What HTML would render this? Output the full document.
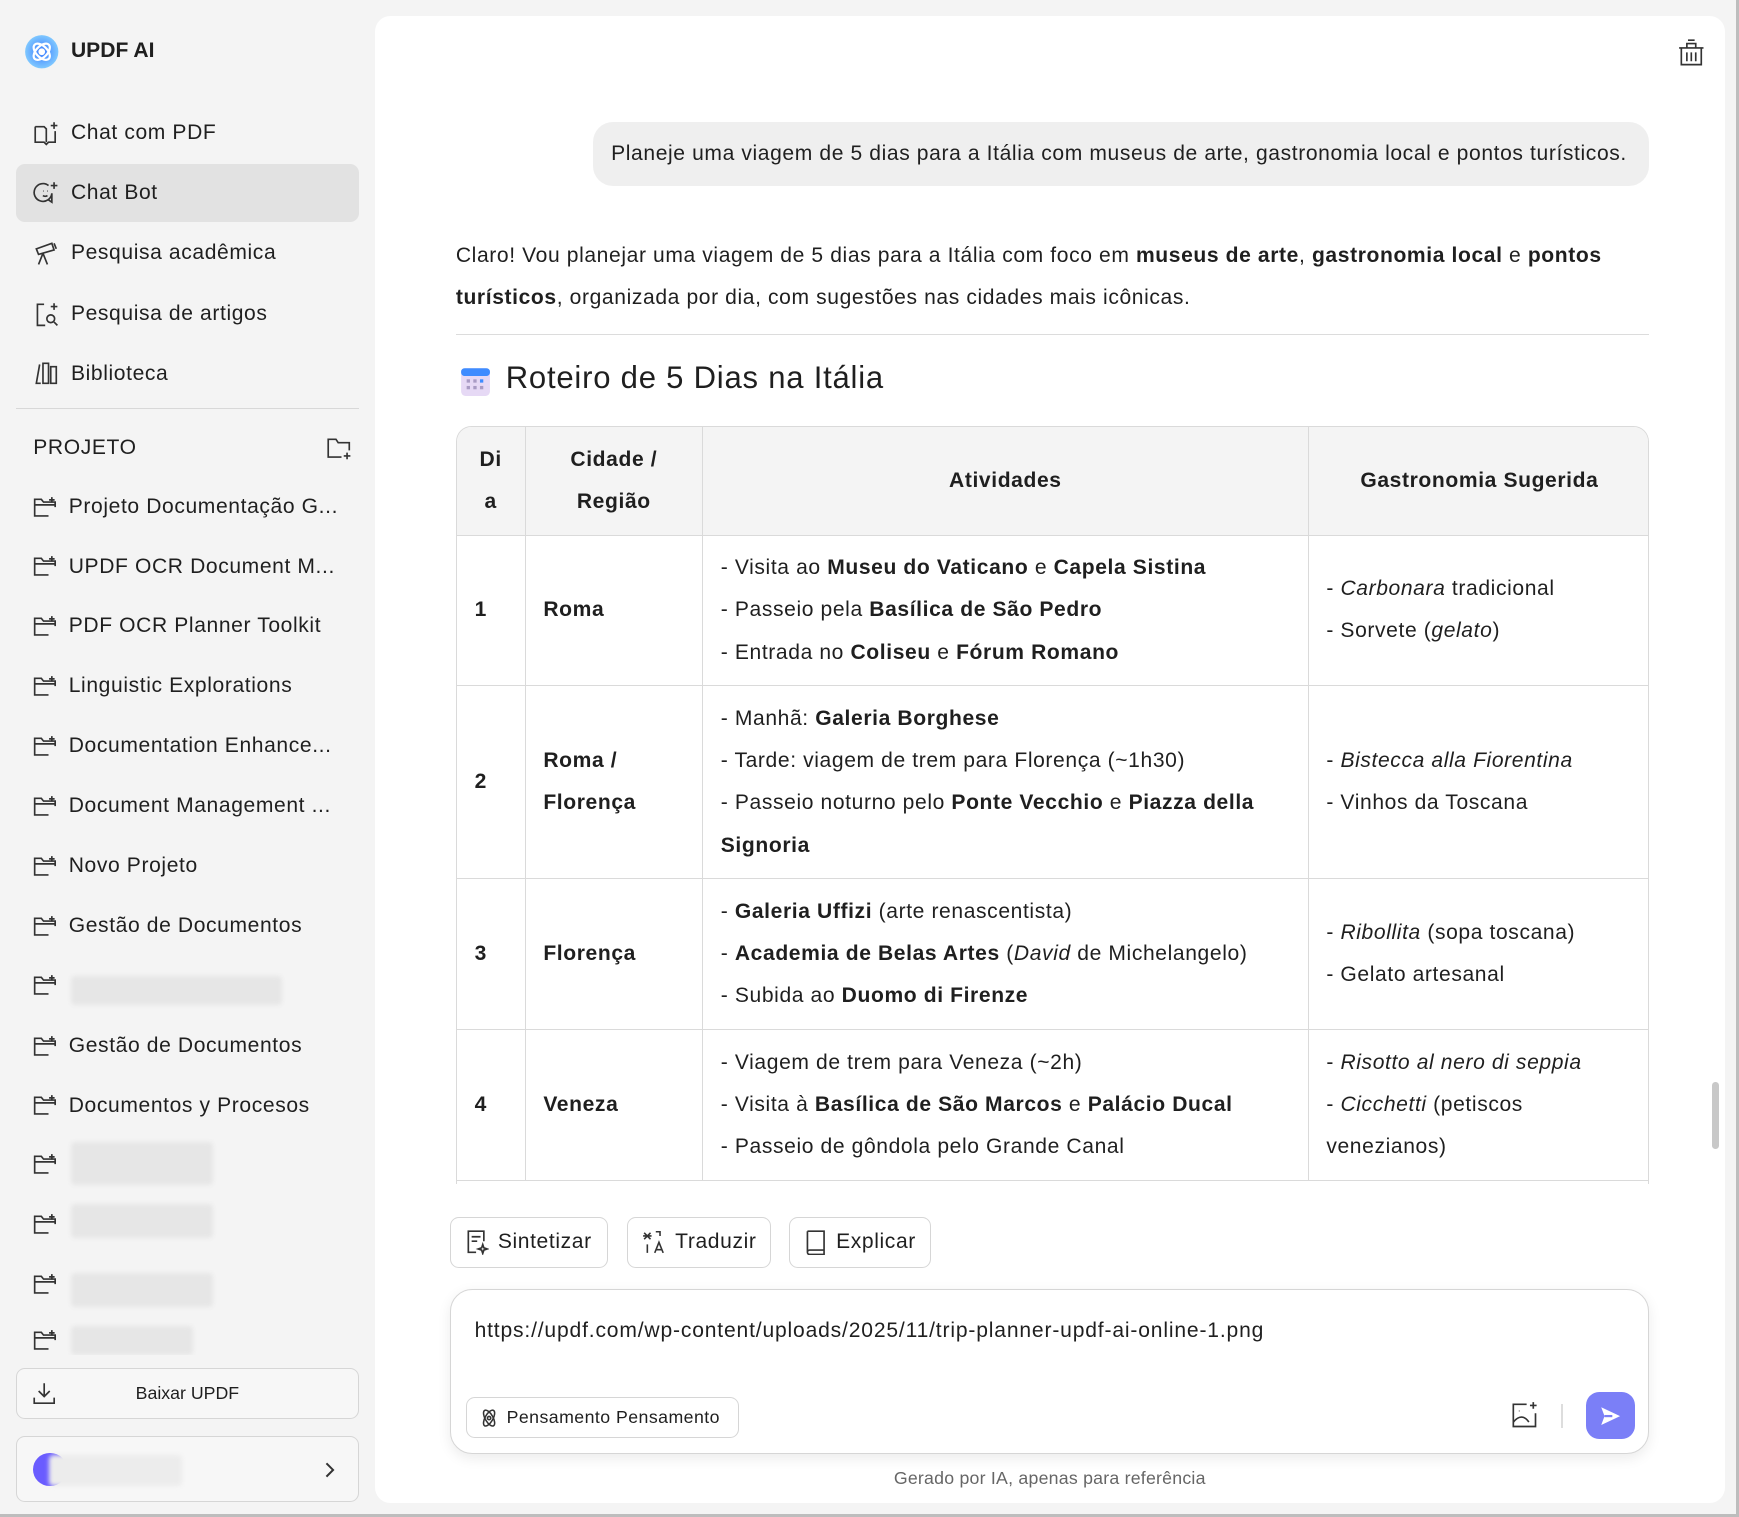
<!DOCTYPE html>
<html><head><meta charset="utf-8"><style>
html,body{margin:0;padding:0;}
body{width:1568px;height:1368px;zoom:1.1091;background:#f4f4f4;font-family:"Liberation Sans",sans-serif;color:#1f1f1f;position:relative;overflow:hidden;letter-spacing:0.55px;}
.abs{position:absolute;}
.nav{position:absolute;left:14px;width:310px;height:52px;border-radius:8px;display:flex;align-items:center;font-size:19px;}
.nav svg{margin-left:16px;margin-right:10px;}
.proj{position:absolute;left:30px;font-size:19px;display:flex;align-items:center;white-space:nowrap;}
.proj svg{margin-right:10px;}
.blur{position:absolute;background:#e6e6e6;border-radius:4px;filter:blur(2px);}
#main{position:absolute;left:338px;top:14px;width:1217px;height:1341px;background:#fff;border-radius:14px;overflow:hidden;}
table{border-collapse:separate;border-spacing:0;font-size:19px;line-height:38px;}
td,th{border-right:1px solid #dadada;border-bottom:1px solid #dadada;padding:0 16px;vertical-align:middle;text-align:left;}
th{background:#f4f4f4;text-align:center;font-weight:bold;}
tr td:last-child,tr th:last-child{border-right:none;}
b{font-weight:bold;}
.btn{position:absolute;top:1083px;height:46px;border:1px solid #d6d6d6;border-radius:8px;display:flex;align-items:center;font-size:19px;box-sizing:border-box;padding:0 12px;gap:8px;}
</style></head><body>
<svg class="abs" style="left:22px;top:31px" width="32" height="32" viewBox="0 0 32 32"><defs><radialGradient id="g" cx="50%" cy="50%" r="50%"><stop offset="0" stop-color="#3a7bff"/><stop offset="1" stop-color="#7fc8ff"/></radialGradient></defs><circle cx="16" cy="16" r="15" fill="url(#g)"/><ellipse cx="16" cy="16" rx="9" ry="5" fill="none" stroke="#fff" stroke-width="2" transform="rotate(45 16 16)"/><ellipse cx="16" cy="16" rx="9" ry="5" fill="none" stroke="#fff" stroke-width="2" transform="rotate(-45 16 16)"/><circle cx="16" cy="16" r="3" fill="#fff"/></svg>
<div class="abs" style="left:64px;top:35px;font-size:19px;font-weight:bold;letter-spacing:0">UPDF AI</div>

<div class="nav" style="top:94px"><svg width="24" height="24" viewBox="0 0 24 24" fill="none" stroke="#333" stroke-width="1.5"><path d="M2 6v14h8l2 2 2-2h6V10M2 6h8l2 2v12M12 8v12"/><path d="M19 2v6M16 5h6"/></svg>Chat com PDF</div>
<div class="nav" style="top:148px;background:#e2e2e2"><svg width="24" height="24" viewBox="0 0 24 24" fill="none" stroke="#333" stroke-width="1.5"><path d="M17 12a8 8 0 1 1-3-7M9 10h.5M13 10h.5M9 14c1 1 3 1 4 0M17 12v8l-3-2"/><path d="M19 2v6M16 5h6"/></svg>Chat Bot</div>
<div class="nav" style="top:202px"><svg width="24" height="24" viewBox="0 0 24 24" fill="none" stroke="#333" stroke-width="1.5"><path d="M3 8l14-5 2 6-14 4zM9 12l-4 10M9 12l4 10M19 3l2 5"/></svg>Pesquisa acadêmica</div>
<div class="nav" style="top:257px"><svg width="24" height="24" viewBox="0 0 24 24" fill="none" stroke="#333" stroke-width="1.5"><path d="M10 3H4v19h7"/><circle cx="16" cy="16" r="3.5"/><path d="M19 19l3 3M19 2v6M16 5h6"/></svg>Pesquisa de artigos</div>
<div class="nav" style="top:311px"><svg width="24" height="24" viewBox="0 0 24 24" fill="none" stroke="#333" stroke-width="1.5"><path d="M6 4L3 21h4M9 3h5v18H9zM16 6h5v15h-5z"/></svg>Biblioteca</div>
<div class="abs" style="left:14px;top:368px;width:310px;height:1px;background:#d8d8d8"></div>
<div class="abs" style="left:30px;top:393px;font-size:19px;">PROJETO</div>
<svg class="abs" style="left:294px;top:393px" width="24" height="22" viewBox="0 0 24 22" fill="none" stroke="#333" stroke-width="1.5"><path d="M14 19H2V3h7l2 3h10v7"/><path d="M19 15v6M16 18h6"/></svg>

<div id="projs"></div>
<script>
var t=["Projeto Documentação G...","UPDF OCR Document M...","PDF OCR Planner Toolkit","Linguistic Explorations","Documentation Enhance...","Document Management ...","Novo Projeto","Gestão de Documentos","","Gestão de Documentos","Documentos y Procesos","","","",""];
var ico='<svg width="22" height="20" viewBox="0 0 22 20" fill="none" stroke="#333" stroke-width="1.5"><path d="M14 18H1.5V3h6l2 2.5H20V10M1.5 8H20"/><path d="M17 1v5M14.5 3.5h5"/></svg>';
var h="";for(var i=0;i<t.length;i++){var y=446+i*54;if(i==14)y=1198;h+='<div class="proj" style="top:'+y+'px">'+ico+t[i]+'</div>';}
document.getElementById('projs').innerHTML=h;
</script>
<div class="blur" style="left:64px;top:880px;width:190px;height:26px"></div>
<div class="blur" style="left:64px;top:1030px;width:128px;height:38px"></div>
<div class="blur" style="left:64px;top:1086px;width:128px;height:30px"></div>
<div class="blur" style="left:64px;top:1148px;width:128px;height:30px"></div>
<div class="blur" style="left:64px;top:1196px;width:110px;height:26px"></div>
<div class="abs" style="left:14px;top:1222px;width:310px;height:10px;background:#f4f4f4"></div>

<div class="abs" style="left:14px;top:1233px;width:310px;height:46px;border:1px solid #d6d6d6;border-radius:8px;box-sizing:border-box;background:#f7f7f7;display:flex;align-items:center;justify-content:center;font-size:16px;letter-spacing:0">Baixar UPDF</div>
<svg class="abs" style="left:29px;top:1245px" width="22" height="22" viewBox="0 0 22 22" fill="none" stroke="#333" stroke-width="1.5"><path d="M11 2v12M6 9l5 5 5-5M2 15v5h18v-5"/></svg>
<div class="abs" style="left:14px;top:1295px;width:310px;height:59px;border:1px solid #d6d6d6;border-radius:8px;box-sizing:border-box;background:#f7f7f7"></div>
<div class="abs" style="left:30px;top:1310px;width:30px;height:30px;border-radius:50%;background:#6a5cff"></div>
<div class="blur" style="left:44px;top:1312px;width:120px;height:28px;background:#ececec"></div>
<svg class="abs" style="left:290px;top:1316px" width="14" height="18" viewBox="0 0 14 18" fill="none" stroke="#333" stroke-width="1.8"><path d="M4 3l6 6-6 6"/></svg>
<div class="abs" style="left:1556px;top:0;width:12px;height:1368px;background:#f4f4f4"></div>
<div class="abs" style="left:1565px;top:0;width:3px;height:1368px;background:#bdbdbd"></div>
<div class="abs" style="left:0;top:1365px;width:1568px;height:3px;background:#bdbdbd"></div>

<div id="main">
<svg class="abs" style="left:1175px;top:20px" width="24" height="26" viewBox="0 0 24 26" fill="none" stroke="#333" stroke-width="1.5"><path d="M3 9h18v15H3zM1 9h22M8 9V5h8v4M9 2h6M8 13v8M12 13v8M16 13v8"/></svg>
<div class="abs" style="left:197px;top:96px;width:952px;height:58px;background:#efefef;border-radius:18px;display:flex;align-items:center;padding-left:16px;box-sizing:border-box;font-size:19px;white-space:nowrap;">Planeje uma viagem de 5 dias para a Itália com museus de arte, gastronomia local e pontos turísticos.</div>
<div class="abs" style="left:73px;top:198px;width:1090px;font-size:19px;line-height:38px;white-space:nowrap;">Claro! Vou planejar uma viagem de 5 dias para a Itália com foco em <b>museus de arte</b>, <b>gastronomia local</b> e <b>pontos</b><br><b>turísticos</b>, organizada por dia, com sugestões nas cidades mais icônicas.</div>
<div class="abs" style="left:73px;top:287px;width:1076px;height:1px;background:#dcdcdc"></div>
<svg class="abs" style="left:77px;top:316px" width="28" height="28" viewBox="0 0 28 28"><rect x="1" y="2" width="26" height="25" rx="4" fill="#e6d9f5"/><rect x="1" y="2" width="26" height="7" rx="3" fill="#3f8cff"/><g fill="#a99bc4"><rect x="6" y="12" width="3" height="3"/><rect x="12" y="12" width="3" height="3"/><rect x="6" y="18" width="3" height="3"/><rect x="12" y="18" width="3" height="3"/><rect x="18" y="18" width="3" height="3"/></g><rect x="18" y="12" width="3" height="3" fill="#3f8cff"/></svg>
<div class="abs" style="left:118px;top:311px;font-size:28px;letter-spacing:0.7px">Roteiro de 5 Dias na Itália</div>
<div class="abs" style="left:73px;top:370px;width:1076px;height:684px;border:1px solid #dadada;border-bottom:none;border-radius:14px 14px 0 0;overflow:hidden;box-sizing:border-box;">
<table style="width:1076px;table-layout:fixed">
<colgroup><col style="width:62px"><col style="width:160px"><col style="width:546px"><col style="width:308px"></colgroup>
<tr style="height:98px"><th>Di a</th><th>Cidade / Região</th><th>Atividades</th><th>Gastronomia Sugerida</th></tr>
<tr style="height:136px"><td><b>1</b></td><td><b>Roma</b></td><td>- Visita ao <b>Museu do Vaticano</b> e <b>Capela Sistina</b><br>- Passeio pela <b>Basílica de São Pedro</b><br>- Entrada no <b>Coliseu</b> e <b>Fórum Romano</b></td><td>- <i>Carbonara</i> tradicional<br>- Sorvete (<i>gelato</i>)</td></tr>
<tr style="height:174px"><td><b>2</b></td><td><b>Roma / Florença</b></td><td>- Manhã: <b>Galeria Borghese</b><br>- Tarde: viagem de trem para Florença (~1h30)<br>- Passeio noturno pelo <b>Ponte Vecchio</b> e <b>Piazza della</b><br><b>Signoria</b></td><td>- <i>Bistecca alla Fiorentina</i><br>- Vinhos da Toscana</td></tr>
<tr style="height:136px"><td><b>3</b></td><td><b>Florença</b></td><td>- <b>Galeria Uffizi</b> (arte renascentista)<br>- <b>Academia de Belas Artes</b> (<i>David</i> de Michelangelo)<br>- Subida ao <b>Duomo di Firenze</b></td><td>- <i>Ribollita</i> (sopa toscana)<br>- Gelato artesanal</td></tr>
<tr style="height:136px"><td><b>4</b></td><td><b>Veneza</b></td><td>- Viagem de trem para Veneza (~2h)<br>- Visita à <b>Basílica de São Marcos</b> e <b>Palácio Ducal</b><br>- Passeio de gôndola pelo Grande Canal</td><td>- <i>Risotto al nero di seppia</i><br>- <i>Cicchetti</i> (petiscos<br>venezianos)</td></tr>
</table></div>
<div class="abs" style="left:1206px;top:962px;width:6px;height:60px;border-radius:3px;background:#c8c8c8"></div>

<div class="btn" style="left:68px;width:142px"><svg width="22" height="24" viewBox="0 0 22 24" fill="none" stroke="#333" stroke-width="1.5"><path d="M10 21H3V2h14v9M6 7h8M6 11h5"/><path d="M16 14l1 3 3 1-3 1-1 3-1-3-3-1 3-1z"/></svg>Sintetizar</div>
<div class="btn" style="left:227px;width:130px"><svg width="24" height="24" viewBox="0 0 24 24" fill="none" stroke="#333" stroke-width="1.5"><path d="M3 3l6 6M9 3l-6 6M2 6h8M14 2h4v4M6 14v8M13 22l4-10 4 10M14.5 19h5"/></svg>Traduzir</div>
<div class="btn" style="left:373px;width:128px"><svg width="22" height="24" viewBox="0 0 22 24" fill="none" stroke="#333" stroke-width="1.5"><path d="M4 2h15v17H6a2 2 0 0 0 0 4h13v-4M4 2v19"/></svg>Explicar</div>

<div class="abs" style="left:68px;top:1148px;width:1081px;height:149px;border:1px solid #d6d6d6;border-radius:20px;box-sizing:border-box;box-shadow:0 4px 12px rgba(0,0,0,0.08);background:#fff;">
<div class="abs" style="left:21px;top:26px;font-size:19px;letter-spacing:0.75px">https://updf.com/wp-content/uploads/2025/11/trip-planner-updf-ai-online-1.png</div>
<div class="abs" style="left:13px;top:97px;width:246px;height:37px;border:1px solid #d6d6d6;border-radius:8px;box-sizing:border-box;display:flex;align-items:center;font-size:16px;gap:6px;padding-left:10px;letter-spacing:0.4px"><svg width="20" height="20" viewBox="0 0 20 20" fill="none" stroke="#333" stroke-width="1.4"><ellipse cx="10" cy="10" rx="8" ry="3.5" transform="rotate(60 10 10)"/><ellipse cx="10" cy="10" rx="8" ry="3.5" transform="rotate(-60 10 10)"/><circle cx="10" cy="10" r="1.5"/></svg>Pensamento Pensamento</div>
<svg class="abs" style="left:955px;top:100px" width="26" height="26" viewBox="0 0 26 26" fill="none" stroke="#333" stroke-width="1.5"><path d="M15 3H3v20h20V11"/><path d="M3 19c5-6 10-6 14 0M8 9h.5"/><path d="M21 1v6M18 4h6"/></svg>
<div class="abs" style="left:1001px;top:103px;width:1px;height:22px;background:#ddd"></div>
<div class="abs" style="left:1023px;top:92px;width:44px;height:43px;border-radius:12px;background:#7b7ff7;display:flex;align-items:center;justify-content:center;"><svg width="20" height="20" viewBox="0 0 20 20"><path d="M2 2l17 8-17 8 3-8z" fill="#fff"/><path d="M5 10h7" stroke="#7b7ff7" stroke-width="2"/></svg></div>
</div>
<div class="abs" style="left:0;width:1217px;top:1310px;text-align:center;font-size:16px;color:#666;letter-spacing:0.2px">Gerado por IA, apenas para referência</div>
</div>
</body></html>
